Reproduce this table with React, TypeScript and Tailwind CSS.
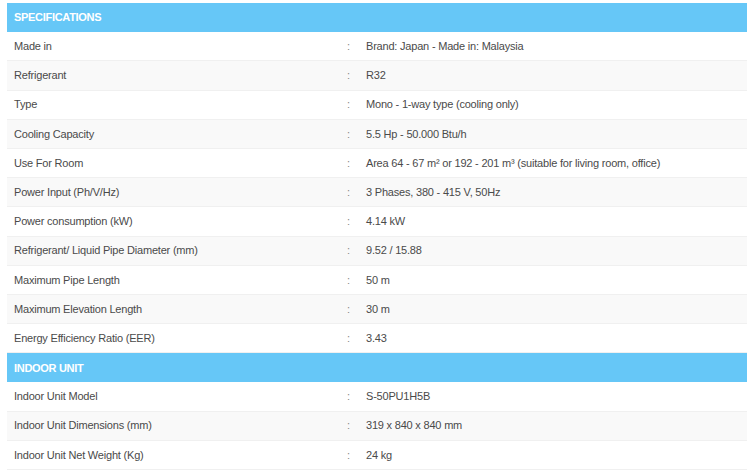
import React from "react";

type Row = [string, string];

const spec: Row[] = [
  ["Made in", "Brand: Japan - Made in: Malaysia"],
  ["Refrigerant", "R32"],
  ["Type", "Mono - 1-way type (cooling only)"],
  ["Cooling Capacity", "5.5 Hp - 50.000 Btu/h"],
  ["Use For Room", "Area 64 - 67 m² or 192 - 201 m³ (suitable for living room, office)"],
  ["Power Input (Ph/V/Hz)", "3 Phases, 380 - 415 V, 50Hz"],
  ["Power consumption (kW)", "4.14 kW"],
  ["Refrigerant/ Liquid Pipe Diameter (mm)", "9.52 / 15.88"],
  ["Maximum Pipe Length", "50 m"],
  ["Maximum Elevation Length", "30 m"],
  ["Energy Efficiency Ratio (EER)", "3.43"],
];

const indoor: Row[] = [
  ["Indoor Unit Model", "S-50PU1H5B"],
  ["Indoor Unit Dimensions (mm)", "319 x 840 x 840 mm"],
  ["Indoor Unit Net Weight (Kg)", "24 kg"],
];

function Header({ title }: { title: string }) {
  return (
    <div className="h-[29.2px] flex items-center bg-[#66c7f7] px-[7px] text-white font-bold text-[11px] tracking-[-0.3px]">
      {title}
    </div>
  );
}

function Rows({ rows }: { rows: Row[] }) {
  return (
    <>
      {rows.map(([k, v], i) => (
        <div
          key={k}
          className={
            "h-[29.2px] flex items-center text-[11px] tracking-[-0.2px] text-[#4a4a4a] border-b border-[#f0f0f0] " +
            (i % 2 === 0 ? "bg-white" : "bg-[#f9f9f9]")
          }
        >
          <div className="w-[340px] pl-[7px]">{k}</div>
          <div className="w-[19px] text-[#888]">:</div>
          <div className="flex-1">{v}</div>
        </div>
      ))}
    </>
  );
}

export default function App() {
  return (
    <div
      className="w-[748px] h-[470px] bg-white pt-[3px] pl-[7px] overflow-hidden"
      style={{ fontFamily: '"Liberation Sans", Arial, sans-serif' }}
    >
      <div className="w-[740px] flex flex-col">
        <Header title="SPECIFICATIONS" />
        <Rows rows={spec} />
        <Header title="INDOOR UNIT" />
        <Rows rows={indoor} />
      </div>
    </div>
  );
}
